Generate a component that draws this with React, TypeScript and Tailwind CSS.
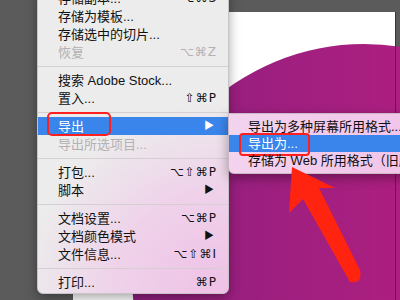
import React from "react";

type Item =
  | { kind: "sep" }
  | {
      kind: "item";
      label: string;
      shortcut?: string;
      arrow?: boolean;
      disabled?: boolean;
      active?: boolean;
      boxed?: boolean;
    };

const mainItems: Item[] = [
  { kind: "item", label: "存储副本...", shortcut: "⌥⌘S" },
  { kind: "item", label: "存储为模板..." },
  { kind: "item", label: "存储选中的切片..." },
  { kind: "item", label: "恢复", shortcut: "⌥⌘Z", disabled: true },
  { kind: "sep" },
  { kind: "item", label: "搜索 Adobe Stock..." },
  { kind: "item", label: "置入...", shortcut: "⇧⌘P" },
  { kind: "sep" },
  { kind: "item", label: "导出", arrow: true, active: true, boxed: true },
  { kind: "item", label: "导出所选项目...", disabled: true },
  { kind: "sep" },
  { kind: "item", label: "打包...", shortcut: "⌥⇧⌘P" },
  { kind: "item", label: "脚本", arrow: true },
  { kind: "sep" },
  { kind: "item", label: "文档设置...", shortcut: "⌥⌘P" },
  { kind: "item", label: "文档颜色模式", arrow: true },
  { kind: "item", label: "文件信息...", shortcut: "⌥⇧⌘I" },
  { kind: "sep" },
  { kind: "item", label: "打印...", shortcut: "⌘P" },
];

const subItems = [
  { label: "导出为多种屏幕所用格式..." },
  { label: "导出为...", active: true },
  { label: "存储为 Web 所用格式（旧版）..." },
];

const font = "font-['Liberation_Sans','Noto_Sans_CJK_SC',sans-serif]";

function MenuRow({ item }: { item: Item }) {
  if (item.kind === "sep") {
    return (
      <div className="flex h-[10px] items-center">
        <div className="h-px w-full bg-[#d5cfd3]" />
      </div>
    );
  }
  return (
    <div
      className={`relative flex h-[18px] items-center justify-between pl-[20px] pr-[11px] text-[13px] ${
        item.active ? "bg-[#3a85ec] text-white" : item.disabled ? "text-[#b4b0b3]" : "text-[#111]"
      }`}
    >
      <span className="leading-none">{item.label}</span>
      {item.shortcut && (
        <span className="font-['DejaVu_Sans',sans-serif] text-[12px] leading-none tracking-[1px]">
          {item.shortcut}
        </span>
      )}
      {item.arrow && <span className="mr-[3px] text-[10px] leading-none">▶</span>}
      {item.boxed && (
        <div className="absolute left-[9px] top-[-5px] h-[24px] w-[64px] rounded-[5px] border-2 border-[#ff1f1f]" />
      )}
    </div>
  );
}

export default function App() {
  return (
    <div className={`relative h-[300px] w-[400px] overflow-hidden bg-[#5b5b5b] ${font}`}>
      {/* artboard */}
      <div className="absolute left-[73px] top-[12px] h-[300px] w-[322px] bg-white" />

      {/* magenta circle */}
      <svg className="absolute left-0 top-0" width="400" height="300">
        <defs>
          <linearGradient id="mg" x1="0" y1="0" x2="1" y2="0">
            <stop offset="0" stopColor="#8e1f7e" />
            <stop offset="0.5" stopColor="#a81f80" />
            <stop offset="1" stopColor="#c91c82" />
          </linearGradient>
        </defs>
        <circle cx="364" cy="276" r="232" fill="url(#mg)" />
        <line x1="395.5" y1="12" x2="395.5" y2="300" stroke="#4a2a40" strokeWidth="1" />
      </svg>

      {/* main menu */}
      <div className="absolute left-[37px] top-[-12px] w-[192px] rounded-b-[6px] border border-[#c9c3c7] bg-[radial-gradient(ellipse_120%_70%_at_100%_100%,#efc0e6_0%,#efd2ea_50%,#ececec_90%)] pb-[2px] shadow-[0_4px_12px_rgba(0,0,0,0.35)]">
        {mainItems.map((it, i) => (
          <MenuRow key={i} item={it} />
        ))}
      </div>

      {/* submenu */}
      <div className="absolute left-[228px] top-[113px] w-[190px] rounded-bl-[6px] border border-[#c9b9c5] bg-[linear-gradient(90deg,#f3d3ee,#f1c4e9)] py-[4px] shadow-[0_4px_12px_rgba(0,0,0,0.35)]">
        {subItems.map((s, i) => (
          <div
            key={i}
            className={`relative flex h-[17px] items-center whitespace-nowrap pl-[19px] text-[13px] ${
              s.active ? "bg-[#3a85ec] text-white" : "text-[#111]"
            }`}
          >
            <span className="leading-none">{s.label}</span>
            {s.active && (
              <div className="absolute left-[10px] top-[-2px] h-[23px] w-[71px] rounded-[4px] border-2 border-[#ff1f1f]" />
            )}
          </div>
        ))}
      </div>

      {/* red arrow */}
      <svg className="absolute left-0 top-0" width="400" height="300">
        <path
          d="M292,167 L335,188 L319,188 L360,270 Q363,284 350,282 L303,199 L289,213 Z"
          fill="#ff2410"
        />
      </svg>
    </div>
  );
}
